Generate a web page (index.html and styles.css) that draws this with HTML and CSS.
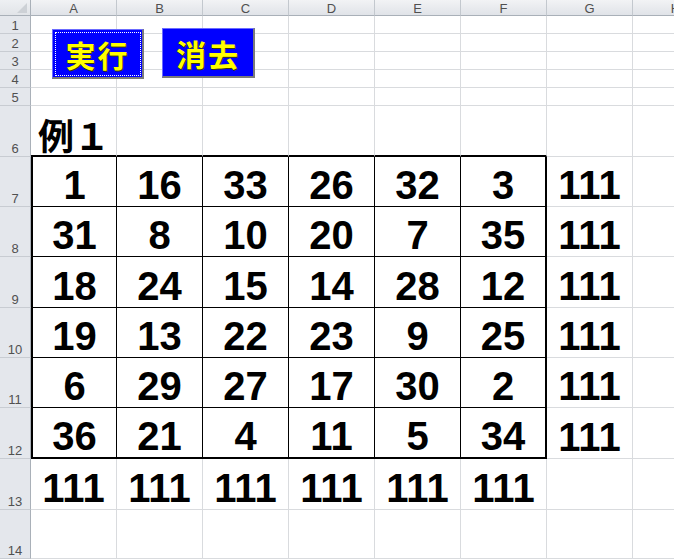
FILE: index.html
```html
<!DOCTYPE html>
<html lang="ja">
<head>
<meta charset="utf-8">
<title>Sheet</title>
<link rel="stylesheet" href="styles.css">
</head>
<body>
<div class="sheet">
  <div class="corner"></div><div class="ch">A</div><div class="ch">B</div><div class="ch">C</div><div class="ch">D</div><div class="ch">E</div><div class="ch">F</div><div class="ch">G</div><div class="ch">H</div>

  <div class="rh">1</div><div class="c"></div><div class="c"></div><div class="c"></div><div class="c"></div><div class="c"></div><div class="c"></div><div class="c"></div><div class="c"></div>
  <div class="rh">2</div><div class="c"></div><div class="c"></div><div class="c"></div><div class="c"></div><div class="c"></div><div class="c"></div><div class="c"></div><div class="c"></div>
  <div class="rh">3</div><div class="c"></div><div class="c"></div><div class="c"></div><div class="c"></div><div class="c"></div><div class="c"></div><div class="c"></div><div class="c"></div>
  <div class="rh">4</div><div class="c"></div><div class="c"></div><div class="c"></div><div class="c"></div><div class="c"></div><div class="c"></div><div class="c"></div><div class="c"></div>
  <div class="rh">5</div><div class="c"></div><div class="c"></div><div class="c"></div><div class="c"></div><div class="c"></div><div class="c"></div><div class="c"></div><div class="c"></div>

  <div class="rh">6</div><div class="c title tt">例１</div><div class="c tt"></div><div class="c tt"></div><div class="c tt"></div><div class="c tt"></div><div class="c tt"></div><div class="c"></div><div class="c"></div>

  <div class="rh">7</div><div class="c t tl">1</div><div class="c t">16</div><div class="c t">33</div><div class="c t">26</div><div class="c t">32</div><div class="c t tr">3</div><div class="c">111</div><div class="c"></div>
  <div class="rh">8</div><div class="c t tl">31</div><div class="c t">8</div><div class="c t">10</div><div class="c t">20</div><div class="c t">7</div><div class="c t tr">35</div><div class="c">111</div><div class="c"></div>
  <div class="rh">9</div><div class="c t tl">18</div><div class="c t">24</div><div class="c t">15</div><div class="c t">14</div><div class="c t">28</div><div class="c t tr">12</div><div class="c">111</div><div class="c"></div>
  <div class="rh">10</div><div class="c t tl">19</div><div class="c t">13</div><div class="c t">22</div><div class="c t">23</div><div class="c t">9</div><div class="c t tr">25</div><div class="c">111</div><div class="c"></div>
  <div class="rh">11</div><div class="c t tl">6</div><div class="c t">29</div><div class="c t">27</div><div class="c t">17</div><div class="c t">30</div><div class="c t tr">2</div><div class="c">111</div><div class="c"></div>
  <div class="rh">12</div><div class="c t tl tb">36</div><div class="c t tb">21</div><div class="c t tb">4</div><div class="c t tb">11</div><div class="c t tb">5</div><div class="c t tr tb">34</div><div class="c">111</div><div class="c"></div>

  <div class="rh">13</div><div class="c">111</div><div class="c">111</div><div class="c">111</div><div class="c">111</div><div class="c">111</div><div class="c">111</div><div class="c"></div><div class="c"></div>
  <div class="rh">14</div><div class="c"></div><div class="c"></div><div class="c"></div><div class="c"></div><div class="c"></div><div class="c"></div><div class="c"></div><div class="c"></div>

  <button class="btn btn-run">実行</button>
  <button class="btn btn-clear">消去</button>
</div>
</body>
</html>
```

FILE: styles.css
```css
* { box-sizing: border-box; }

body {
  margin: 0;
  background: #fff;
  font-family: "Liberation Sans", "Noto Sans CJK JP", sans-serif;
  overflow: hidden;
}

.sheet {
  position: relative;
  display: grid;
  grid-template-columns: 31px repeat(8, 86px);
  grid-template-rows: 16px repeat(5, 18px) 51px 50px 50px 51px 50px 50px 51px 51px 49px;
  width: 674px;
  height: 559px;
  overflow: hidden;
}

.corner {
  position: relative;
  background: linear-gradient(#eef0f3, #e1e4e8);
  border-right: 1px solid #a9b0b8;
  border-bottom: 1px solid #a9b0b8;
}
.corner::after {
  content: "";
  position: absolute;
  right: 3px;
  bottom: 2px;
  border-style: solid;
  border-width: 0 0 10px 10px;
  border-color: transparent transparent #cdd1d6 transparent;
}

.ch {
  display: flex;
  align-items: center;
  justify-content: center;
  background: linear-gradient(#f2f3f5, #e0e3e8);
  border-right: 1px solid #c3c8ce;
  border-bottom: 1px solid #a9b0b8;
  font-size: 13px;
  color: #505050;
  padding-top: 1px;
}

.rh {
  display: flex;
  align-items: flex-end;
  justify-content: center;
  background: #e4e7ec;
  border-right: 1px solid #a9b0b8;
  border-bottom: 1px solid #c8ccd2;
  font-size: 13px;
  line-height: 1;
  color: #505050;
  padding-bottom: 1px;
}

.c {
  display: flex;
  align-items: flex-end;
  justify-content: center;
  border-right: 1px solid #d9dbde;
  border-bottom: 1px solid #d9dbde;
  font-size: 40px;
  font-weight: bold;
  line-height: 1;
  color: #000;
  padding-bottom: 1px;
}

.c.title {
  justify-content: flex-start;
  font-family: "Noto Sans CJK JP", sans-serif;
  font-size: 36px;
  padding-left: 7px;
  padding-bottom: 3px;
}

.t {
  border-right: 1px solid #000;
  border-bottom: 1px solid #000;
}
.tt { border-bottom: 2px solid #000; }
.tl { border-left: 2px solid #000; }
.tr { border-right: 2px solid #000; }
.tb { border-bottom: 2px solid #000; }

.btn {
  position: absolute;
  display: flex;
  align-items: center;
  justify-content: center;
  padding: 0;
  margin: 0;
  background: #0000ff;
  border-style: solid;
  border-width: 1px 2px 2px 1px;
  border-color: #6b6bff #7a7a7a #7a7a7a #6b6bff;
  color: #ffff00;
  font-family: "Noto Sans CJK JP", sans-serif;
  font-weight: bold;
  font-size: 30px;
  line-height: 1;
  text-shadow: 1px 1px 0 #3a3a00;
  letter-spacing: 2px;
}

.btn-run {
  left: 52px;
  top: 29px;
  width: 92px;
  height: 50px;
  outline: 1px dotted #fff;
  outline-offset: -4px;
}

.btn-clear {
  left: 162px;
  top: 28px;
  width: 93px;
  height: 50px;
}
```
